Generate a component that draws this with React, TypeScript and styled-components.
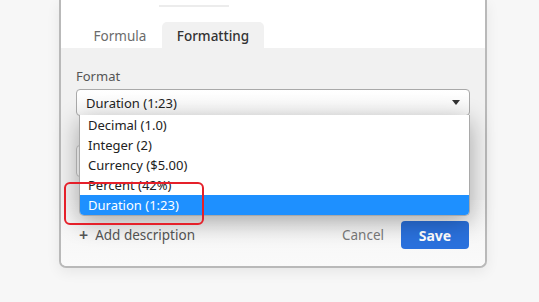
import styled, { createGlobalStyle } from "styled-components";

const GlobalStyle = createGlobalStyle`
  html, body {
    margin: 0;
    padding: 0;
    background: #f7f7f7;
    font-family: "Segoe UI", "Noto Sans", "Liberation Sans", sans-serif;
  }
  #root {
    height: 302px;
    overflow: hidden;
  }
`;

const Page = styled.div`
  padding-left: 59px;
  height: 302px;
`;

const Panel = styled.div`
  position: relative;
  width: 424px;
  border: 2px solid #b9b9b9;
  border-top: none;
  border-radius: 0 0 7px 7px;
  background: #fff;
  box-shadow: 0 4px 14px rgba(0, 0, 0, 0.07);
  display: flex;
  flex-direction: column;
`;

const TopStrip = styled.div`
  height: 22px;
  padding: 5px 0 0 98px;
  box-sizing: border-box;
`;

const NameLine = styled.div`
  width: 70px;
  height: 2px;
  background: #ececec;
`;

const TabRow = styled.div`
  display: flex;
  height: 26px;
  padding-left: 17px;
`;

const Tab = styled.div<{ $active?: boolean }>`
  width: ${(p) => (p.$active ? "102px" : "84px")};
  display: flex;
  align-items: center;
  justify-content: center;
  font-size: 13.5px;
  font-weight: ${(p) => (p.$active ? 500 : 400)};
  color: ${(p) => (p.$active ? "#333" : "#6b6b6b")};
  background: ${(p) => (p.$active ? "#f1f1f1" : "transparent")};
  border-radius: 5px 5px 0 0;
  padding-top: 2px;
  box-sizing: border-box;
`;

const Body = styled.div`
  background: #f1f1f1;
  height: 152px;
  padding: 19px 15px 0;
  box-sizing: border-box;
  display: flex;
  flex-direction: column;
`;

const Label = styled.div`
  font-size: 13px;
  color: #555;
  height: 22px;
`;

const SelectWrap = styled.div`
  position: relative;
`;

const Select = styled.div`
  height: 27px;
  border: 1px solid #a9a9a9;
  border-radius: 4px;
  background: linear-gradient(#ffffff, #f6f6f6);
  display: flex;
  align-items: center;
  justify-content: space-between;
  padding: 0 9px 0 9px;
  box-sizing: border-box;
  font-size: 13px;
  color: #222;
`;

const Caret = styled.span`
  width: 0;
  height: 0;
  border-left: 4px solid transparent;
  border-right: 4px solid transparent;
  border-top: 5px solid #333;
`;

const Input = styled.div`
  margin-top: 29px;
  height: 30px;
  border: 1px solid #c4c4c4;
  border-radius: 4px;
  background: #fff;
`;

const Menu = styled.div`
  position: absolute;
  top: 26px;
  left: 3px;
  width: 389px;
  background: #fff;
  border: 1px solid #a9a9a9;
  border-top: none;
  border-radius: 0 0 5px 5px;
  box-shadow: 0 6px 24px rgba(0, 0, 0, 0.32);
  overflow: hidden;
  z-index: 2;
`;

const Option = styled.div<{ $selected?: boolean }>`
  height: 20px;
  line-height: 20px;
  padding-left: 8px;
  font-size: 13px;
  color: ${(p) => (p.$selected ? "#fff" : "#222")};
  background: ${(p) => (p.$selected ? "#1e90ff" : "transparent")};
`;

const Footer = styled.div`
  height: 66px;
  display: flex;
  align-items: center;
  justify-content: space-between;
  padding: 0 16px 0 18px;
  background: linear-gradient(#f4f4f4, #fafafa);
  border-radius: 0 0 6px 6px;
`;

const AddDescription = styled.div`
  font-size: 13.5px;
  color: #555;
  display: flex;
  align-items: center;
  gap: 7px;
  margin-top: 3px;
`;

const Plus = styled.span`
  font-size: 16px;
  font-weight: 600;
  color: #555;
`;

const Actions = styled.div`
  display: flex;
  align-items: center;
  gap: 17px;
  margin-top: 4px;
`;

const Cancel = styled.div`
  font-size: 13.5px;
  color: #7a7a7a;
`;

const SaveButton = styled.div`
  width: 68px;
  height: 28px;
  border-radius: 4px;
  background: #2a71dd;
  color: #fff;
  font-size: 14px;
  font-weight: 700;
  display: flex;
  align-items: center;
  justify-content: center;
`;

const Highlight = styled.div`
  position: absolute;
  left: 3px;
  top: 182px;
  width: 140px;
  height: 43px;
  border: 2px solid #e5202a;
  border-radius: 6px;
  box-sizing: border-box;
  z-index: 3;
  pointer-events: none;
`;

const options = [
  "Decimal (1.0)",
  "Integer (2)",
  "Currency ($5.00)",
  "Percent (42%)",
  "Duration (1:23)",
];

export default function App() {
  return (
    <>
      <GlobalStyle />
      <Page>
        <Panel>
          <TopStrip>
            <NameLine />
          </TopStrip>
          <TabRow>
            <Tab>Formula</Tab>
            <Tab $active>Formatting</Tab>
          </TabRow>
          <Body>
            <Label>Format</Label>
            <SelectWrap>
              <Select>
                <span>Duration (1:23)</span>
                <Caret />
              </Select>
              <Menu>
                {options.map((o) => (
                  <Option key={o} $selected={o === "Duration (1:23)"}>
                    {o}
                  </Option>
                ))}
              </Menu>
            </SelectWrap>
            <Input />
          </Body>
          <Footer>
            <AddDescription>
              <Plus>+</Plus>
              Add description
            </AddDescription>
            <Actions>
              <Cancel>Cancel</Cancel>
              <SaveButton>Save</SaveButton>
            </Actions>
          </Footer>
          <Highlight />
        </Panel>
      </Page>
    </>
  );
}
